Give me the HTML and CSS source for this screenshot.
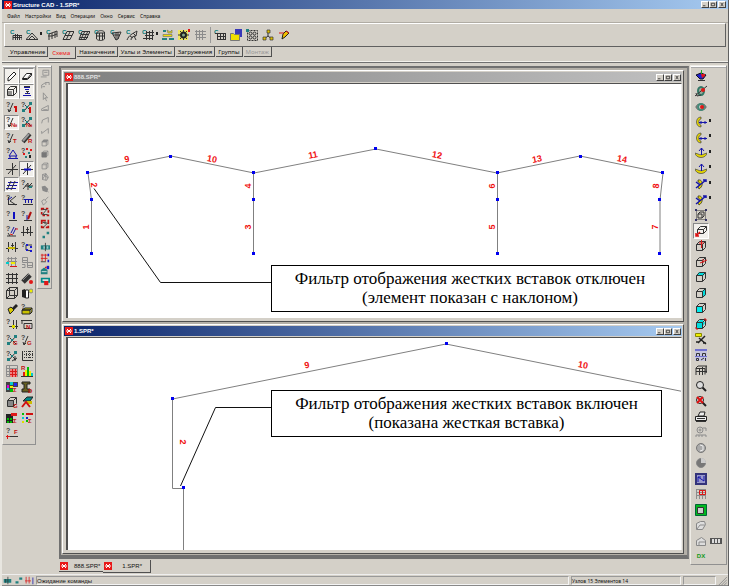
FILE: index.html
```html
<!DOCTYPE html>
<html lang="ru">
<head>
<meta charset="utf-8">
<title>Structure CAD - 1.SPR*</title>
<link rel="stylesheet" href="styles.css">
</head>
<body>
<svg class="defs" aria-hidden="true">
  <defs>
    <symbol id="q" viewBox="0 0 12 12"><text class="qt" x="0" y="6">?</text></symbol>
    <symbol id="c" viewBox="0 0 12 12"><text class="ct" x="0" y="5">C</text></symbol>
    <symbol id="logo" viewBox="0 0 8 8"><path fill="#e81818" d="M0 0h8v8H0z"/><path stroke="#fff" fill="none" d="M2 2l4 4M6 2L2 6M1 4h2M5 4h2"/></symbol>
    <symbol id="cube" viewBox="0 0 12 12"><path class="k" d="M1.500 4.500h6v6h-6zM1.500 4.500l3-3h6v6l-3 3M7.500 4.500l3-3"/></symbol>
    <symbol id="qbar" viewBox="0 0 12 12"><use href="#q"/><path class="k" d="M3 11L7 2M2 8l1 3 2-2"/></symbol>
    <symbol id="qnodes" viewBox="0 0 12 12"><use href="#q"/><path class="k" d="M3 10l7-8M4 4l6 6"/><path class="ft" d="M8 1h3v3H8zM1 8h3v3H1zM5 5h2v2H5z"/></symbol>
    <symbol id="axis" viewBox="0 0 12 12"><path class="k" d="M0 6.500h12M6.500 0v12M2 11l8-9"/></symbol>
    <symbol id="hash" viewBox="0 0 12 12"><path class="k" d="M0 2.500h12M0 6.500h12M0 10.500h12M2.500 1v11M6.500 1v11M10.500 1v11"/></symbol>
    <symbol id="dims" viewBox="0 0 12 12"><path class="k" d="M2.500 1v10M9.500 1v10M0 7.500h12M5 4.500h3M6.500 2v7"/></symbol>
    <symbol id="gcube" viewBox="0 0 12 12"><path class="g" d="M2.500 4.500h5v5h-5zM2.500 4.500l2-2h5v5l-2 2M7.500 4.500l2-2"/></symbol>
    <symbol id="rotx" viewBox="0 0 12 12"><path d="M6 1C0 1 0 11 6 11V9C3 9 3 3 6 3z" fill="#e8d800" stroke="#444" stroke-width=".7"/><path class="b" d="M4 6.500h8M10 5v3M6 5v3"/></symbol>
    <symbol id="roty" viewBox="0 0 12 12"><path d="M0 6c1 6 11 6 12 0l-3 1c-1 1-5 1-6 0z" fill="#e8d800" stroke="#444" stroke-width=".7"/><path class="b" d="M6.500 1v7M4 4l2.500-3L9 4"/></symbol>
    <symbol id="rotz" viewBox="0 0 12 12"><path d="M3 2c5-1 6 6 1 9l-1-2c3-2 2-5 0-5z" fill="#e8d800" stroke="#222" stroke-width=".7"/><path stroke="#1414a8" stroke-width="1.500" fill="none" d="M1 10l10-8M8 2h3v2M1 4l4 3"/></symbol>
    <symbol id="lens" viewBox="0 0 12 12"><path d="M7.500 7.500L11 11" stroke="#222" stroke-width="2"/><circle cx="5" cy="5" r="3.500" fill="#ddd" stroke="#222"/></symbol>
  </defs>
</svg>
<div class="app">
  <header class="titlebar">
    <svg class="logo"><use href="#logo"/></svg><h1>Structure CAD - 1.SPR*</h1>
    <div class="winbtns"><button aria-label="Свернуть"><svg viewBox="0 0 7 6"><path class="k" d="M1 4.500h3"/></svg></button><button aria-label="Развернуть"><svg viewBox="0 0 7 6"><path class="k" d="M1.500 1.500h4v3h-4z"/></svg></button><button class="close" aria-label="Закрыть"><svg viewBox="0 0 7 6"><path class="k" d="M2 1l3 4M5 1L2 5"/></svg></button></div>
  </header>
  <nav class="menu">
    <button>Файл</button><button>Настройки</button><button>Вид</button><button>Операции</button><button>Окно</button><button>Сервис</button><button>Справка</button>
  </nav>
  <div class="toolbar">
    <button aria-label="Рама"><svg viewBox="0 0 12 12"><use href="#c"/><path class="k" d="M3 11V6.500h9V11M5.500 5v6M7.500 5v6M9.500 6v5M3 8.500h9"/></svg></button>
    <button class="more" aria-label="Ферма"><svg viewBox="0 0 12 12"><use href="#c"/><path class="k" d="M0 10.500h12L6 4zM3 10l3-3 3 3"/></svg></button>
    <button aria-label="Пространственная рама"><svg viewBox="0 0 12 12"><use href="#c"/><path class="k" d="M3 11V5l8-3v6M6 10V4M9 9V3M2 7h4l5-2"/></svg></button>
    <button aria-label="Плита"><svg viewBox="0 0 12 12"><use href="#c"/><path class="k" d="M1 10.500h7l4-8H5zM3 6.500h7M4.500 10l4-8"/></svg></button>
    <button aria-label="Балка-стенка"><svg viewBox="0 0 12 12"><use href="#c"/><path class="k" d="M1 10.500h7l4-8H4zM2 8.500h8M3 5.500h8M3 10l4-8M6 10l4-8"/></svg></button>
    <button aria-label="Оболочка вращения"><svg viewBox="0 0 12 12"><use href="#c"/><path class="k" d="M2.500 4v6c2 2 6 2 8 0V3c-2-2-6-2-8 1zM2.500 7h8M5.500 4v7M8.500 4v7M3 4h8"/></svg></button>
    <button aria-label="Воронка"><svg viewBox="0 0 12 12"><use href="#c"/><path class="k" d="M2 4l4 7 2-1 3-7zM6 11V4M8 10V3M3 6h7"/></svg></button>
    <button aria-label="Поверхность"><svg viewBox="0 0 12 12"><use href="#c"/><path class="k" d="M1 11c2-5 5-6 10-9l-1 5c-3 0-5 1-5 4M4 7l3 2M7 4l3 3M8 7l2 4"/></svg></button>
    <button class="more" aria-label="Сетка"><svg viewBox="0 0 12 12"><use href="#c"/><path class="k" d="M1 9.500h10M3 6.500h9M4 3.500h8M4.500 2v9M7.500 2v9M10.500 1v10"/></svg></button>
    <button aria-label="Сборка"><svg viewBox="0 0 12 12"><path fill="#f0e000" stroke="#776" stroke-width=".7" d="M1 7.500h9v-2H1zM5 1l3 2 2-2v3H6z"/><path class="ft" d="M0 9h5v2H0zM7 9h5v2H7zM1 1h3v2H1z"/></svg></button>
    <button aria-label="Генератор"><svg viewBox="0 0 12 12"><path fill="#f0e860" d="M0 1h10v10H0z"/><circle cx="5.500" cy="6" r="2.500" stroke="#222" stroke-width="2" fill="#8a8"/><path class="k" d="M5.500 1v2M5.500 9v2M0 6h2M9 6h2M2 2l2 2M9 2L7 4M2 10l2-2M9 10L7 8"/><path class="fr" d="M10 0h2v3h-2z"/></svg></button>
    <button disabled aria-label="Триангуляция"><svg viewBox="0 0 12 12"><path class="g" d="M1 2.500h11M1 5.500h11M3 8.500h9M2.500 1v10M5.500 1v10M8.500 1v10"/></svg></button>
    <i class="sep"></i>
    <button aria-label="Копия схемы"><svg viewBox="0 0 12 12"><use href="#c"/><path class="k" d="M1 4.500h11M3.500 4v7M6.500 4v7M9.500 4v7M3 7.500h9M3 10.500h9M11.500 4v7"/></svg></button>
    <button aria-label="Папка"><svg viewBox="0 0 12 12"><path fill="#3838b8" d="M5 0h7v8H5z"/><path fill="#f0e000" stroke="#777" d="M.5 4.500h3l1 1h5v6h-9z"/></svg></button>
    <button aria-label="Группа узлов"><svg viewBox="0 0 12 12"><path class="k" d="M1.500 1.500h10v10h-10z" stroke-dasharray="2 1"/><circle class="k" cx="4.500" cy="4.500" r="1.500"/><circle class="k" cx="8.500" cy="4.500" r="1.500"/><circle class="k" cx="4.500" cy="8.500" r="1.500"/><circle class="k" cx="8.500" cy="8.500" r="1.500"/><path class="ft" d="M0 0h3v3H0z"/></svg></button>
    <button aria-label="Связи"><svg viewBox="0 0 12 12"><path class="k" d="M6 3v4l-4 3M6 7l4 3"/><path fill="#e0c000" stroke="#333" stroke-width=".7" d="M5 1h3v3H5zM1 8h3v3H1zM8 8h3v3H8z"/></svg></button>
    <button aria-label="Правка"><svg viewBox="0 0 12 12"><path fill="#f0c000" stroke="#222" d="M4 10l1-5 3-3 3 2-4 4z"/><path class="r" d="M1 4h5M8 2l3 2"/></svg></button>
  </div>
  <div class="tabs" role="tablist">
    <button role="tab">Управление</button><button role="tab" class="on" aria-selected="true">Схема</button><button role="tab">Назначения</button><button role="tab">Узлы и Элементы</button><button role="tab">Загружения</button><button role="tab">Группы</button><button role="tab" disabled>Монтаж</button>
  </div>
  <main class="work">
    <aside class="palette wide">
      <i class="grip"></i>
      <div class="cells two">
        <button class="down" aria-label="Стержни"><svg viewBox="0 0 12 12"><path fill="#fff" stroke="#222" d="M2 8l6-6 2 2-6 6-2 1z"/></svg></button>
        <button class="down" aria-label="Пластины"><svg viewBox="0 0 12 12"><path fill="#fff" stroke="#222" d="M1.500 8.500l4-5h5l-4 5zM1.500 8.500v1h5l4-4v-2"/></svg></button>
        <button class="down" aria-label="Объёмные"><svg viewBox="0 0 12 12"><use href="#cube"/><path class="k" d="M3 6v4M5 6v4"/></svg></button>
        <button class="down" aria-label="Специальные"><svg viewBox="0 0 12 12"><path class="b" d="M3 2.500h6M4 4.500h4M4 8.500h5M2 10.500h8"/><path class="k" d="M3 1.500h6M5 6.500h3M6.500 7v2"/></svg></button>
        <button aria-label="Номера элементов"><svg viewBox="0 0 12 12"><use href="#qbar"/><path stroke="#d01010" stroke-width="2" fill="none" d="M10 5v6M8 6h2"/></svg></button>
        <button aria-label="Номера узлов"><svg viewBox="0 0 12 12"><use href="#qnodes"/><path stroke="#d01010" stroke-width="2" d="M9 6v6"/></svg></button>
        <button class="down" aria-label="Типы элементов"><svg viewBox="0 0 12 12"><use href="#qbar"/><text class="rt" x="5" y="11">№</text></svg></button>
        <button aria-label="Типы узлов"><svg viewBox="0 0 12 12"><use href="#qnodes"/><text class="rt" x="5" y="11">№</text></svg></button>
        <button aria-label="Тип жёсткости"><svg viewBox="0 0 12 12"><use href="#qbar"/><text class="rt" x="7" y="11">T</text></svg></button>
        <button aria-label="Жёсткость"><svg viewBox="0 0 12 12"><path stroke="#333" stroke-width="4" d="M2 10l7-8"/><path stroke="#999" stroke-width="2" d="M2 9l6-7"/><text class="rt" x="7" y="11">R</text></svg></button>
        <button aria-label="Связи в узлах"><svg viewBox="0 0 12 12"><use href="#q"/><path class="b" d="M3 9l4-6 4 6zM2 11.500h10M4 9v3M10 9v3"/></svg></button>
        <button aria-label="Совпадающие узлы"><svg viewBox="0 0 12 12"><use href="#q"/><path class="fr" d="M5 1h2v2H5zM9 2h2v2H9zM2 6h2v2H2z"/><path class="ft" d="M7 5h2v2H7zM4 9h2v2H4z"/><path class="fk" d="M8 8h2v3H8z"/></svg></button>
        <button aria-label="Общие оси"><svg viewBox="0 0 12 12"><use href="#axis"/></svg></button>
        <button class="down" aria-label="Местные оси"><svg viewBox="0 0 12 12"><use href="#axis"/><path stroke="#1010c0" stroke-width="2" d="M3 6.500h7"/></svg></button>
        <button class="down" aria-label="Жёсткие вставки"><svg viewBox="0 0 12 12"><path class="b" d="M2 3.500h10M1 6.500h10M0 9.500h10"/><path class="k" d="M1 11l4-9M5 11l4-9"/></svg></button>
        <button aria-label="Оси элементов"><svg viewBox="0 0 12 12"><use href="#q"/><path class="k" d="M2 10l5-6v7M4 7h8M7 8l4-4"/><path class="ft" d="M8 7h3v2H8z"/></svg></button>
        <button aria-label="Шарниры"><svg viewBox="0 0 12 12"><use href="#q"/><path class="k" d="M2.500 3v8M2 10.500h9M10 2L4 7l6 4"/><path class="b" d="M2 6l4-3"/></svg></button>
        <button aria-label="Распределённая нагрузка"><svg viewBox="0 0 12 12"><use href="#q"/><path class="b" d="M3 5.500h9M4.500 5v4M7.500 5v4M10.500 5v4"/><path class="k" d="M2 10.500h10"/></svg></button>
        <button aria-label="Узловая нагрузка"><svg viewBox="0 0 12 12"><use href="#q"/><path stroke="#1010c0" stroke-width="2" d="M8 2v7"/><path class="k" d="M3 10.500h8"/></svg></button>
        <button aria-label="Сосредоточенная нагрузка"><svg viewBox="0 0 12 12"><use href="#q"/><path stroke="#b01010" stroke-width="2" d="M10 2L7 9"/><path class="b" d="M6 5v5"/><path class="k" d="M3 10.500h8"/></svg></button>
        <button aria-label="Значения нагрузок"><svg viewBox="0 0 12 12"><use href="#q"/><path class="b" d="M5 8l3-6M7 9l3-6"/><path class="r" d="M9 4h3M4 9l3 1"/><path class="k" d="M1 11h9M2 8l2 3"/></svg></button>
        <button aria-label="Размеры"><svg viewBox="0 0 12 12"><use href="#dims"/></svg></button>
        <button aria-label="Отметки"><svg viewBox="0 0 12 12"><use href="#dims"/><path stroke="#c8b800" stroke-width="2" d="M2 7h7"/></svg></button>
        <button aria-label="Группы узлов"><svg viewBox="0 0 12 12"><use href="#q"/><path class="k" d="M5 4h6M5 4v5l6 1"/><path class="fb" d="M5 3h2v2H5zM9 5h2v2H9zM5 8h2v2H5zM9 9h2v2H9z"/></svg></button>
        <button aria-label="Фрагмент сетки"><svg viewBox="0 0 12 12"><path class="g" d="M1 2.500h10M1 5.500h10M2.500 1v9M5.500 1v9M9.500 1v9"/><path class="r" d="M4 10.500h7"/><path fill="#0cc" d="M0 6h3v2H0z"/><path fill="#ee0" d="M5 6h4v2H5z"/></svg></button>
        <button disabled aria-label="Таблицы"><svg viewBox="0 0 12 12"><path class="g" d="M1.500 1.500h5v5h-5zM1 4.500h5M6.500 6.500h5v5h-5zM6 9.500h5M1 8.500h3v3H1"/></svg></button>
        <button aria-label="Сетка осей"><svg viewBox="0 0 12 12"><use href="#hash"/></svg></button>
        <button aria-label="Сечение"><svg viewBox="0 0 12 12"><path stroke="#333" stroke-width="5" d="M2 10l7-7"/><path stroke="#888" d="M2 8l6-6"/><circle class="fr" cx="10" cy="10" r="2"/></svg></button>
        <button aria-label="Контур"><svg viewBox="0 0 12 12"><path class="k" d="M.5 3.500h8v8h-8zM3.500.5h8v8h-8zM.5 3.500l3-3M8.500 3.500l3-3M8.500 11.500l3-3M.5 11.500l3-3"/></svg></button>
        <button aria-label="Освещение"><svg viewBox="0 0 12 12"><path class="fk" d="M1 3l3-1v9l-3-1z"/><path fill="#fff" stroke="#222" d="M4.500 3h3v8h-3z"/><circle cx="10" cy="4" r="2" fill="#ee0" stroke="#888"/></svg></button>
        <button aria-label="Цвет"><svg viewBox="0 0 12 12"><path fill="#222" d="M6 5l4-4 2 2-4 4z"/><path fill="#d8c800" stroke="#222" d="M2 6l3-2 3 3-4 4z"/></svg></button>
        <button aria-label="Нумерация блоков"><svg viewBox="0 0 12 12"><use href="#q"/><path fill="#c8c000" stroke="#222" d="M1 7l3-2h7l-2 2zM1 7h8v4H1zM9 11l2-2V5"/></svg></button>
        <button aria-label="Проверка сетки"><svg viewBox="0 0 12 12"><use href="#q"/><path class="k" d="M7.500 2v9M10.500 2v9M3 8.500h9"/><path fill="#dd0" d="M6 7h3v3H6z"/></svg></button>
        <button aria-label="Номера нагрузок"><svg viewBox="0 0 12 12"><path class="k" d="M0 2.500h11M3 5.500h8v5H3zM1 2v4"/><text class="rt" x="5" y="11">N</text></svg></button>
        <button aria-label="Группа узлов G"><svg viewBox="0 0 12 12"><use href="#qnodes"/><text class="rt" x="7" y="11">G</text></svg></button>
        <button aria-label="Группа элементов G"><svg viewBox="0 0 12 12"><use href="#qbar"/><text class="rt" x="6" y="11">G</text></svg></button>
        <button aria-label="Удалённые"><svg viewBox="0 0 12 12"><use href="#qnodes"/><path class="k" d="M9 6v5M6 11l5-3"/></svg></button>
        <button aria-label="Шаг сетки"><svg viewBox="0 0 12 12"><path class="k" stroke-dasharray="1 1" d="M3 1.500h9M3 4.500h9M3 7.500h9M5.500 1v8M8.500 1v8M11.500 1v8"/><path class="k" d="M1.500 1v9.500H12"/></svg></button>
        <button aria-label="Поля"><svg viewBox="0 0 12 12"><path class="g" d="M.5.5h11v11H.5zM0 3.500h12M0 6.500h12M0 9.500h12M3.500 0v12"/><path fill="#f08080" d="M4 4h7v8H4z"/><path class="r" d="M4 6.500h7M4 9.500h7M6.500 4v8M9.500 4v8"/></svg></button>
        <button aria-label="Гистограмма"><svg viewBox="0 0 12 12"><text class="rt" x="0" y="5">R</text><path fill="#0b0" d="M6 2h2v9H6z"/><path fill="#ee0" d="M4 5h2v6H4zM8 6h2v5H8z"/><path fill="#0cc" d="M10 8h2v3h-2z"/><path class="fr" d="M2 7h2v4H2z"/><path class="k" d="M0 11.500h12"/></svg></button>
        <button aria-label="Цветовая карта"><svg viewBox="0 0 12 12"><path fill="#444" d="M0 1h12v10H0z"/><path fill="#0cc" d="M4 1h3v3H4zM1 7h2v2H1z"/><path fill="#22e" d="M8 2h3v3H8z"/><path fill="#ee0" d="M4 5h3v2H4z"/><path fill="#d0d" d="M1 4h2v3H1z"/><path fill="#0b0" d="M4 8h3v3H4z"/><path fill="#d4d0c8" d="M7 6h5v6H7z"/><text class="rt" x="7" y="11">Σ</text></svg></button>
        <button aria-label="Профиль"><svg viewBox="0 0 12 12"><path fill="#666020" stroke="#222" d="M1 1h8v2H6v5h3v3H1V8h2V3H1z"/><text class="rt" x="7" y="12">D</text></svg></button>
        <button aria-label="Объём G"><svg viewBox="0 0 12 12"><use href="#cube"/><path fill="#888" d="M2 5h5v5H2z"/><text class="rt" x="7" y="12">G</text></svg></button>
        <button aria-label="Армирование"><svg viewBox="0 0 12 12"><path fill="#088" stroke="#222" d="M2 5l4-4h6L9 5z"/><path fill="#cb0" d="M6 5h5v3H6z"/><path stroke="#d01010" stroke-width="2" fill="none" d="M1 11l4-5 4 5"/></svg></button>
        <button aria-label="Сумма по группам"><svg viewBox="0 0 12 12"><path class="fk" d="M0 2h7v9H0z"/><path fill="#0b0" d="M1 6h2v2H1zM4 6h2v2H4zM1 9h2v2H1zM4 9h2v2H4z"/><path class="fr" d="M5 1h6v3H5z"/><text class="rt" x="7" y="11">Σ</text></svg></button>
        <button aria-label="Сумма"><svg viewBox="0 0 12 12"><path fill="#0b0" d="M1 1h2v2H1zM5 8h2v2H5z"/><path fill="#0cc" d="M1 5h2v2H1z"/><path class="fb" d="M5 5h2v2H5z"/><path fill="#dd0" d="M1 9h2v2H1z"/><path stroke="#d01010" stroke-width="2" d="M5 2h7"/><text class="rt" x="7" y="11">Σ</text></svg></button>
        <button aria-label="Функция"><svg viewBox="0 0 12 12"><use href="#q"/><path class="k" d="M4 9.500h8"/><path class="r" d="M0 9.500h4M1.500 8v4"/><text class="rt" x="8" y="7">F</text></svg></button>
      </div>
    </aside>
    <aside class="palette narrow">
      <i class="grip"></i>
      <div class="cells one">
        <button disabled aria-label="Лист"><svg viewBox="0 0 12 12"><path class="g" d="M3.500 1.500h7v6h-7zM5 4h4M1 9.500h7"/></svg></button>
        <button disabled aria-label="Стрелка вверх"><svg viewBox="0 0 12 12"><path class="g" d="M2 10V6l5-3h4v3M7 3v3M3 8h3"/></svg></button>
        <button disabled aria-label="Указатель"><svg viewBox="0 0 12 12"><path class="g" d="M4 1v8l2-2 2 4M4 1l5 6H6"/></svg></button>
        <button disabled aria-label="Уклон"><svg viewBox="0 0 12 12"><path class="g" d="M2 7l8-4v6H2zM4 8h5"/></svg></button>
        <button disabled aria-label="Уклон влево"><svg viewBox="0 0 12 12"><path class="g" d="M2 10l1-4 7-3v6"/></svg></button>
        <button disabled aria-label="Уклон вправо"><svg viewBox="0 0 12 12"><path class="g" d="M2 9l8-6v6M2 6v3"/></svg></button>
        <button disabled aria-label="Куб вверх"><svg viewBox="0 0 12 12"><use href="#gcube"/><path fill="#888" d="M4 2h6L8 5H2z"/></svg></button>
        <button disabled aria-label="Куб вперёд"><svg viewBox="0 0 12 12"><use href="#gcube"/><path fill="#777" d="M2 4h6v6H2z"/></svg></button>
        <button disabled aria-label="Куб"><svg viewBox="0 0 12 12"><use href="#gcube"/></svg></button>
        <button disabled aria-label="Сфера"><svg viewBox="0 0 12 12"><path class="g" d="M3 3l4-1 3 4-2 4-5-1zM3 9l4-7v8M3 3l7 4"/></svg></button>
        <button disabled aria-label="Заливка"><svg viewBox="0 0 12 12"><path fill="#888" d="M2 3l4-1 4 4-2 4-5-2z"/><path class="g" d="M5 3l5 7"/></svg></button>
        <button disabled aria-label="Кисть"><svg viewBox="0 0 12 12"><path class="g" d="M10 1L6 5M2 6l3-2 3 3-4 4z"/></svg></button>
        <button aria-label="Фильтр групп"><svg viewBox="0 0 12 12"><path stroke="#c01010" stroke-width="2" fill="none" stroke-dasharray="3 2" d="M2 2h8v8H2z"/><path class="k" d="M3 3h5L3 9h6"/></svg></button>
        <button aria-label="Фильтр связей"><svg viewBox="0 0 12 12"><path stroke="#c01010" stroke-width="2" fill="none" stroke-dasharray="5 2" d="M2 2h8v8H2z"/><path class="k" d="M3 4l6 1-5 5M6 3v3"/></svg></button>
        <button aria-label="Узлы"><svg viewBox="0 0 12 12"><path class="ft" d="M8 2h3v3H8zM3 7h3v3H3z"/></svg></button>
        <button aria-label="Блок"><svg viewBox="0 0 12 12"><path class="ft" d="M1 4h11v5H1z"/><path fill="#9cc" d="M4 5h2v3H4zM8 5h2v3H8z"/><path class="k" d="M6.500 1v10"/></svg></button>
        <button aria-label="Разбивка"><svg viewBox="0 0 12 12"><path class="r" d="M1 2.500h8M1 6.500h8M2.500 1v9M6.500 1v9"/><path class="k" d="M1 10.500h6"/><path class="fb" d="M9 1h2v3H9zM9 8h2v3H9z"/></svg></button>
        <button aria-label="Фигуры"><svg viewBox="0 0 12 12"><path class="ft" d="M1 6l4-3 4 3v5H1z"/><path class="fb" d="M8 1h3v4H8z"/><path class="fr" d="M6 2h2v2H6z"/><path stroke="#eee" d="M2 8h6"/></svg></button>
        <button aria-label="Окно фильтра"><svg viewBox="0 0 12 12"><path fill="#ddd" stroke="#088" stroke-width="2" d="M2 3h9v4H2z"/><path class="fr" d="M5 6h5v5H5z"/></svg></button>
      </div>
    </aside>
    <section class="center">
      <div class="mdi">
        <article class="win first">
          <header><svg class="logo"><use href="#logo"/></svg><h2>888.SPR*</h2><div class="winbtns"><button aria-label="Свернуть"><svg viewBox="0 0 7 6"><path class="k" d="M1 4.500h3"/></svg></button><button aria-label="Развернуть"><svg viewBox="0 0 7 6"><path class="k" d="M1.500 1.500h4v3h-4z"/></svg></button><button class="close" aria-label="Закрыть"><svg viewBox="0 0 7 6"><path class="k" d="M2 1l3 4M5 1L2 5"/></svg></button></div></header>
          <div class="view">
            <svg class="drawing">
              <g transform="translate(-68 -84)">
                <path class="bar" d="M91.500 254V200L88 173l83-17 83 17 122-24 121 24 83-17 83 17-3 27v54M253.500 173v81M497.500 173v81"/>
                <path class="lead" d="M94 188.500L160.500 282.500H272"/>
                <path class="node" d="M90 252h3v3h-3zM90 198h3v3h-3zM86 171h3v3h-3zM169 155h3v3h-3zM252 171h3v3h-3zM252 198h3v3h-3zM252 252h3v3h-3zM374 147h3v3h-3zM496 171h3v3h-3zM496 198h3v3h-3zM496 252h3v3h-3zM579 155h3v3h-3zM661 171h3v3h-3zM658 198h3v3h-3zM658 252h3v3h-3z"/>
                <g class="num">
                  <text transform="translate(127 159) rotate(-11)" y="3">9</text><text transform="translate(212 159) rotate(11)" y="3">10</text><text transform="translate(313 155) rotate(-11)" y="3">11</text><text transform="translate(437 155) rotate(11)" y="3">12</text><text transform="translate(537 159) rotate(-11)" y="3">13</text><text transform="translate(622 159) rotate(11)" y="3">14</text>
                  <text transform="translate(94 185) rotate(84)" y="3">2</text><text transform="translate(86 227) rotate(-90)" y="3">1</text><text transform="translate(248 186) rotate(-90)" y="3">4</text><text transform="translate(248 227) rotate(-90)" y="3">3</text><text transform="translate(492 186) rotate(-90)" y="3">6</text><text transform="translate(492 227) rotate(-90)" y="3">5</text><text transform="translate(656 186) rotate(-84)" y="3">8</text><text transform="translate(655 227) rotate(-90)" y="3">7</text>
                </g>
              </g>
            </svg>
            <p class="callout off">Фильтр отображения жестких вставок отключен<br>(элемент показан с наклоном)</p>
          </div>
        </article>
        <article class="win second">
          <header><svg class="logo"><use href="#logo"/></svg><h2>1.SPR*</h2><div class="winbtns"><button aria-label="Свернуть"><svg viewBox="0 0 7 6"><path class="k" d="M1 4.500h3"/></svg></button><button aria-label="Развернуть"><svg viewBox="0 0 7 6"><path class="k" d="M1.500 1.500h4v3h-4z"/></svg></button><button class="close" aria-label="Закрыть"><svg viewBox="0 0 7 6"><path class="k" d="M2 1l3 4M5 1L2 5"/></svg></button></div></header>
          <div class="view">
            <svg class="drawing">
              <g transform="translate(-68 -338)">
                <path class="bar" d="M183.500 560V488.500H172.500V399L446 344l244 49"/>
                <path class="lead" d="M180.500 486L215.500 407.500H272"/>
                <path class="node" d="M171 397h3v3h-3zM445 342h3v3h-3zM182 486h3v3h-3z"/>
                <g class="num"><text transform="translate(307 365) rotate(-11)" y="3">9</text><text transform="translate(583 365) rotate(11)" y="3">10</text><text transform="translate(183 442) rotate(90)" y="3">2</text></g>
              </g>
            </svg>
            <p class="callout on">Фильтр отображения жестких вставок включен<br>(показана жесткая вставка)</p>
          </div>
        </article>
      </div>
      <div class="doctabs" role="tablist"><button role="tab"><svg class="logo"><use href="#logo"/></svg>888.SPR*</button><button role="tab" class="on" aria-selected="true"><svg class="logo"><use href="#logo"/></svg>1.SPR*</button></div>
    </section>
    <aside class="palette right">
      <i class="grip"></i>
      <div class="cells views">
        <button aria-label="Начальный вид"><svg viewBox="0 0 12 12"><path fill="#2020d0" stroke="#112" d="M1 5l5-2 5 2-3 4H5z"/><path class="fr" d="M6 4h4v2L7 8z"/><path stroke="#2a2" d="M6.500 0v4"/><path class="k" d="M3 10.500h7"/></svg></button>
        <button aria-label="Вращение"><svg viewBox="0 0 12 12"><ellipse cx="6" cy="6" rx="3" ry="4" fill="#9a9" stroke="#376" stroke-width="2"/><path class="k" d="M0 11l12-10M1 8l1 3 4-1"/><circle class="fr" cx="8" cy="5" r="2"/></svg></button>
        <button aria-label="Вращение по горизонтали"><svg viewBox="0 0 12 12"><ellipse cx="6" cy="6" rx="5" ry="3" fill="#ccc" stroke="#555"/><circle cx="6" cy="6" r="3" fill="none" stroke="#487" stroke-width="2"/><circle class="fr" cx="7" cy="6" r="2"/></svg></button>
        <button class="more" aria-label="Поворот X вперёд"><svg viewBox="0 0 12 12"><use href="#rotx"/></svg></button>
        <button class="more" aria-label="Поворот X назад"><svg viewBox="0 0 12 12"><use href="#rotx"/></svg></button>
        <button class="more" aria-label="Поворот Y вперёд"><svg viewBox="0 0 12 12"><use href="#roty"/></svg></button>
        <button class="more" aria-label="Поворот Y назад"><svg viewBox="0 0 12 12"><use href="#roty"/></svg></button>
        <button class="more" aria-label="Поворот Z вперёд"><svg viewBox="0 0 12 12"><use href="#rotz"/></svg></button>
        <button class="more" aria-label="Поворот Z назад"><svg viewBox="0 0 12 12"><use href="#rotz"/></svg></button>
        <button aria-label="Фрагмент"><svg viewBox="0 0 12 12"><path class="k" d="M1.500 1.500h9v9h-9z" stroke-dasharray="1 1"/><path class="k" d="M3 5h4v4H3zM3 5l2-2h4v4L7 9"/><path fill="#336" d="M0 0h2v2H0zM10 0h2v2h-2zM0 10h2v2H0zM10 10h2v2h-2z"/></svg></button>
        <button class="down" aria-label="Изометрия"><svg viewBox="0 0 12 12"><path class="k" d="M2.500 4.500h6v4h-6zM2.500 4.500l3-3h6v4l-3 3M8.500 4.500l3-3"/><path stroke="#e01010" stroke-width="1.500" d="M1 11l4-4M1 8v3h3" fill="none"/></svg></button>
        <button aria-label="Сечение XZ"><svg viewBox="0 0 12 12"><use href="#cube"/><path class="r" d="M6.500 0v8M4 3h5"/></svg></button>
        <button aria-label="Сечение YZ"><svg viewBox="0 0 12 12"><use href="#cube"/><path class="r" d="M5 7l7-3M8 3v4"/></svg></button>
        <button aria-label="Вид сверху"><svg viewBox="0 0 12 12"><path fill="#0dd" d="M4 1h7L8 5H1z"/><use href="#cube"/></svg></button>
        <button aria-label="Вид сбоку"><svg viewBox="0 0 12 12"><path fill="#0dd" d="M7 4l4-3v7l-4 3z"/><use href="#cube"/></svg></button>
        <button aria-label="Вид спереди"><svg viewBox="0 0 12 12"><path fill="#0ee" d="M1 4h7v7H1z"/><use href="#cube"/></svg></button>
        <button aria-label="Сечение объёма"><svg viewBox="0 0 12 12"><path fill="#0dd" d="M1 5l6-4 3 4-4 6H1z"/><use href="#cube"/><path class="r" d="M9 1h2v2M1 9v2h2"/></svg></button>
        <button aria-label="Отсечение"><svg viewBox="0 0 12 12"><path stroke="#222" stroke-width="1.500" fill="none" d="M10 3L3 10M4 5l7 6M1 9h3M8 10h3"/><path fill="#ee0" stroke="#880" d="M.5.5h6v3h-6z"/></svg></button>
        <button aria-label="Окна"><svg viewBox="0 0 12 12"><path fill="#c4c4dc" d="M0 0h12v12H0z"/><path stroke="#7070d0" stroke-width="2" d="M0 1h12"/><path class="k" d="M1.500 7V4.500h3V7M7.500 7V4.500h3V7M1.500 9.500h2v2h-2zM6 11l3-2M10.500 9v3"/><path stroke="#7070d0" d="M0 7.500h12"/></svg></button>
        <button aria-label="Рамы"><svg viewBox="0 0 12 12"><path class="k" d="M1 11V4l2-2h9v7M1 4.500h9v6M4.500 4v7M7.500 3v8M1 7.500h11M11 2v7"/></svg></button>
        <button aria-label="Увеличить"><svg viewBox="0 0 12 12"><use href="#lens"/></svg></button>
        <button aria-label="Отменить увеличение"><svg viewBox="0 0 12 12"><use href="#lens"/><path stroke="#e01010" stroke-width="2" d="M2 2l6 6M8 2L2 8"/></svg></button>
        <button aria-label="Печать"><svg viewBox="0 0 12 12"><path fill="#eee" stroke="#222" d="M3 5l2-4h5L9 5zM.5 5.500h11v4H.5z"/><path class="k" d="M1 10.500h10M2 7.500h8"/></svg></button>
        <button disabled aria-label="Рендеринг"><svg viewBox="0 0 12 12"><circle cx="5" cy="4" r="3" class="g"/><circle cx="5" cy="4" r="1" class="g"/><path class="g" d="M8 2h3v3M1 11V9h10v2M4 9v2M7 9v2"/></svg></button>
        <button disabled aria-label="Каркас сферы"><svg viewBox="0 0 12 12"><circle cx="6" cy="6" r="4.500" fill="#aaa" stroke="#777"/><path stroke="#eee" fill="none" d="M5 3l3 1v4L5 9"/></svg></button>
        <button disabled aria-label="Тонирование"><svg viewBox="0 0 12 12"><circle cx="6" cy="6" r="4.500" fill="#777" stroke="#888"/><path fill="#ccc" d="M6 6V1a5 5 0 0 1 5 5z"/></svg></button>
        <button aria-label="Анимация"><svg viewBox="0 0 12 12"><path fill="#99c" stroke="#33337a" stroke-width="2" d="M1 1h10v10H1z"/><path class="b" d="M3 9V4l6 4V3M3 4h3"/></svg></button>
        <button aria-label="Таблица"><svg viewBox="0 0 12 12"><path class="g" d="M1 1.500h10M1 4.500h10M1 7.500h10M1.500 1v10M4.500 1v10M7.500 1v10M10.500 1v10"/><path class="r" d="M4.500 2.500h6v4h-6zM7.500 2v5"/></svg></button>
        <button aria-label="Экран"><svg viewBox="0 0 12 12"><path fill="#00b820" stroke="#063" d="M.5.5h11v11H.5z"/><path fill="#ccc" stroke="#333" d="M2.500 3.500h6v6h-6z"/></svg></button>
        <button disabled aria-label="Открыть"><svg viewBox="0 0 12 12"><path fill="#ddd" stroke="#888" d="M1.500 10.500v-6l4-2h4l1 3-3 5z"/><path class="g" d="M2 10l3-4h5"/></svg></button>
        <button disabled class="kv" aria-label="Папка вида"><svg viewBox="0 0 12 12"><path fill="#ddd" stroke="#888" d="M1.500 10.500v-5l5-3 4 3v5z"/><path class="g" d="M4 10V7h6"/></svg></button>
        <button class="dx">DX</button>
      </div>
    </aside>
  </main>
  <footer class="status">
    <svg viewBox="0 0 12 12"><path class="ft" d="M1 4h10v5H1z"/><path class="k" d="M6.500 1v10M3.500 4v5"/></svg><svg viewBox="0 0 12 12"><path class="ft" d="M7 2h4v3H7zM2 7h4v3H2z"/></svg><svg viewBox="0 0 12 12"><path class="r" d="M1.500 1v9M5.500 1v9M0 6.500h8"/><path class="b" d="M10.500 2v9"/></svg>
    <span class="msg">Ожидание команды</span><span class="count">Узлов 15 Элементов 14</span><span class="spare"></span>
    <svg class="size" viewBox="0 0 10 10"><path class="g" d="M1 10l9-9M4 10l6-6M7 10l3-3"/></svg>
  </footer>
</div>
</body>
</html>
```
FILE: styles.css
```css
* { box-sizing: border-box; }
body {
  margin: 0;
  background: #d4d0c8;
  color: #111;
  font: 6px/8px "Liberation Sans", Arial, sans-serif;
}
button {
  margin: 0;
  padding: 0;
  border: 0;
  background: none;
  color: inherit;
  font: inherit;
}
svg { display: block; }
h1, h2, p { margin: 0; font-size: inherit; }
.defs { position: absolute; width: 0; height: 0; }

/* Icon strokes and fills */
.k { stroke: #333; fill: none; }
.g { stroke: #8c8c8c; fill: none; }
.r { stroke: #d81818; fill: none; }
.b { stroke: #1414a8; fill: none; }
.fk { fill: #222; }
.fr { fill: #e01818; }
.ft { fill: #208080; }
.fb { fill: #1818d0; }
.qt { font: bold 7px "Liberation Sans", sans-serif; fill: #444; }
.ct { font: bold 6px "Liberation Sans", sans-serif; fill: #007878; }
.rt { font: bold 6px "Liberation Sans", sans-serif; fill: #c01010; }

.app {
  display: flex;
  flex-direction: column;
  height: 100vh;
  border-left: 2px solid #e8e6e0;
  border-right: 1px solid #606060;
}
.logo { width: 8px; height: 8px; flex: none; }

.titlebar {
  display: flex;
  align-items: center;
  flex: none;
  gap: 1px;
  height: 9px;
  padding: 0 2px;
  background: linear-gradient(90deg, #0a246a, #a6caf0);
  color: #fff;
}
.winbtns { display: flex; margin-left: auto; }
.winbtns button {
  width: 8px;
  height: 7px;
  background: #d4d0c8;
  border: 1px solid;
  border-color: #fff #404040 #404040 #fff;
}
.winbtns svg { width: 100%; height: 100%; }
.winbtns .close { margin-left: 1px; }

.menu {
  display: flex;
  flex: none;
  align-items: center;
  gap: 5px;
  height: 14px;
  padding: 0 5px;
  border-bottom: 1px solid #b0aca4;
  font-family: "Noto Sans", sans-serif;
  font-size: 5px;
}

.toolbar {
  display: flex;
  flex: none;
  align-items: center;
  height: 24px;
  margin: 0 2px;
  padding: 0 3px;
  border: 1px solid;
  border-color: #fff #606060 #606060 #fff;
}
.toolbar button, .cells button {
  display: flex;
  align-items: center;
  justify-content: center;
}
.toolbar button { width: 16px; }
.toolbar button svg { width: 12px; height: 12px; }
.toolbar .more { width: 20px; justify-content: flex-start; padding-left: 2px; }
.more::after {
  content: "";
  width: 2px;
  height: 3px;
  margin-left: 2px;
  margin-bottom: 4px;
  background: #222;
}
.sep { width: 1px; height: 16px; margin: 0 1px 0 2px; background: #999; }

.tabs {
  display: flex;
  flex: none;
  align-items: flex-start;
  height: 15px;
  padding: 0 6px;
  border-bottom: 1px solid #f4f2ec;
  font-family: "Noto Sans", sans-serif;
}
.tabs button {
  height: 10px;
  margin-right: 1px;
  padding: 0 2px;
  border: solid #505050;
  border-width: 0 1px 1px 0;
}
.tabs .on { height: 12px; padding: 0 5px 0 3px; color: #f02020; }
.tabs button:disabled { color: #999; }

.work {
  display: flex;
  flex: 1;
  min-height: 0;
  align-items: flex-start;
  border-top: 1px solid #707070;
}
.palette {
  flex: none;
  margin-top: 2px;
  border: 1px solid;
  border-color: #eeece6 #909090 #909090 #eeece6;
}
.grip {
  display: block;
  height: 2px;
  border-top: 1px solid #fff;
  border-bottom: 1px solid #aaa;
}
.cells { display: grid; grid-auto-rows: 1fr; }
.cells svg { width: 12px; height: 12px; flex: none; }
.wide { width: 34px; }
.two { grid-template-columns: 15px 15px; height: 373px; margin: 0 1px 3px; }
.narrow { width: 15px; margin-left: 1px; }
.cells.one { height: 220px; padding-bottom: 1px; }
.one svg { width: 10px; height: 10px; }
.down {
  background: #f2f0ec;
  border: 1px solid;
  border-color: #888 #fff #fff #888;
}
.right { width: 37px; margin-left: 1px; margin-right: 1px; }
.views { grid-template-columns: 1fr; height: 496px; padding: 0 2px; }
.views button { justify-self: start; min-width: 16px; padding: 0 2px; }
.views .down { padding: 0 1px; }
.views .more::after { margin-left: 2px; }
.views .kv::after {
  content: "";
  width: 10px;
  height: 4px;
  margin-left: 3px;
  border: 1px solid #555;
  background: repeating-linear-gradient(90deg, #555 0 1px, #ddd 1px 3px);
}
.dx { color: #109818; font-weight: bold; }

.center {
  display: flex;
  flex: 1;
  flex-direction: column;
  align-self: stretch;
  min-width: 0;
  margin-left: 7px;
  padding-top: 3px;
}
.mdi {
  display: flex;
  flex: 1;
  flex-direction: column;
  gap: 2px;
  min-height: 0;
  padding: 2px 3px 1px 1px;
  border: 2px solid;
  border-color: #707070 #808080 #707070 #707070;
  border-bottom-width: 4px;
  background: #b4b0a8;
}
.win {
  display: flex;
  flex-direction: column;
  min-height: 0;
  padding: 1px;
  border: 1px solid;
  border-color: #fff #505050 #505050 #fff;
  background: #d4d0c8;
}
.first { flex: 253; }
.second { flex: 230; }
.win header {
  display: flex;
  flex: none;
  align-items: center;
  gap: 1px;
  height: 10px;
  padding: 0 1px;
  background: linear-gradient(90deg, #808080, #c0c0c0);
  color: #e0e0e0;
  font-weight: bold;
}
.second header { background: linear-gradient(90deg, #0a246a, #a6caf0); color: #fff; }
.view {
  position: relative;
  flex: 1;
  min-height: 0;
  margin: 1px 0 2px 2px;
  overflow: hidden;
  border: solid #505050;
  border-width: 1px 0 0 2px;
  border-right: 1px solid #eee;
  background: #fff;
}
.drawing { width: 100%; height: 100%; }
.bar { stroke: #808080; fill: none; }
.lead { stroke: #111; fill: none; }
.node { fill: #0000f0; }
.num { font: bold 9px "Liberation Sans", sans-serif; fill: #f01010; text-anchor: middle; }
.callout {
  position: absolute;
  left: 203px;
  height: 47px;
  padding-top: 3px;
  border: 1px solid #000;
  background: #fff;
  color: #000;
  font: 17px/19px "Liberation Serif", "Times New Roman", serif;
  text-align: center;
  white-space: nowrap;
}
.off { top: 181px; width: 398px; }
.callout.on { top: 52px; width: 391px; }

.doctabs { display: flex; flex: none; height: 15px; padding-top: 1px; }
.doctabs button {
  display: flex;
  align-items: center;
  gap: 6px;
  height: 12px;
  padding: 0 3px 0 1px;
  border: solid #505050;
  border-width: 0 0 1px;
}
.doctabs .on { gap: 10px; height: 13px; padding-right: 8px; border-right-width: 1px; }

.status {
  display: flex;
  flex: none;
  align-items: center;
  gap: 2px;
  height: 12px;
  padding: 0 1px;
  border-top: 1px solid #eee;
  border-bottom: 1px solid #888;
}
.status svg { width: 9px; height: 9px; }
.status span { height: 9px; border: 1px solid; border-color: #999 #f4f4f4 #f4f4f4 #999; }
.msg { flex: 1; }
.status .count { width: 110px; font-family: "Noto Sans", sans-serif; font-size: 5px; }
.spare { width: 33px; }
```
